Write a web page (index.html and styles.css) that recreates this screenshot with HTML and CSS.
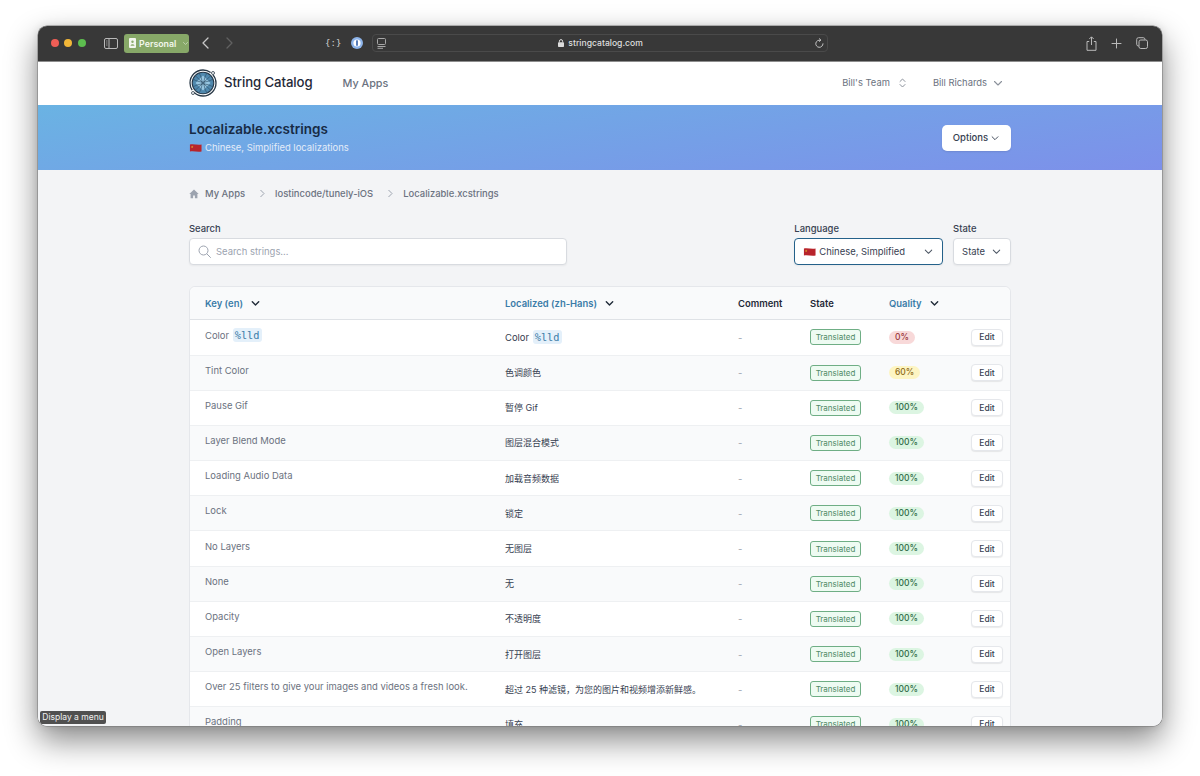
FILE: index.html
```html
<!DOCTYPE html>
<html lang="en">
<head>
<meta charset="utf-8">
<title>String Catalog</title>
<link rel="stylesheet" href="styles.css">
</head>
<body>
<svg class="defs" width="0" height="0" aria-hidden="true">
  <symbol id="flag" viewBox="0 0 14 10">
    <path d="M1 1.200c4-1 8 1 12.500 0v7.600c-4.500 1-8.500-1-12.500 0z" fill="#b8242b"/>
    <path d="M3.400 2.300l.4 1 1 .1-.8.6.3 1-.9-.6-.9.6.3-1-.8-.6 1-.1z" fill="#e0a92e"/>
  </symbol>
  <symbol id="chev" viewBox="0 0 12 12">
    <path d="M2.500 4.500L6 8l3.500-3.500" fill="none" stroke="currentColor" stroke-width="1.100" stroke-linecap="round" stroke-linejoin="round"/>
  </symbol>
  <symbol id="chevb" viewBox="0 0 12 12">
    <path d="M2.500 4.200L6 7.700l3.500-3.500" fill="none" stroke="currentColor" stroke-width="1.500" stroke-linecap="round" stroke-linejoin="round"/>
  </symbol>
</svg>
<div class="window">
  <header class="toolbar">
    <div class="lights"><i class="light red"></i><i class="light yellow"></i><i class="light green"></i></div>
    <svg class="tb-icon sidebar" width="14" height="11" viewBox="0 0 14 11"><rect x=".5" y=".5" width="13" height="10" rx="1.500" fill="none" stroke="#b9b9b9"/><path d="M5 .5v10" stroke="#b9b9b9"/><path d="M2 3h1.500M2 5h1.500M2 7h1.500" stroke="#b9b9b9" stroke-width=".7"/></svg>
    <div class="profile">
      <svg width="7" height="10" viewBox="0 0 7 10"><rect width="7" height="10" rx="1" fill="#f3f6ee"/><circle cx="3.500" cy="3.800" r="1.200" fill="#8aab6c"/><path d="M1.500 7.800c0-2.200 4-2.200 4 0z" fill="#8aab6c"/></svg>
      <span>Personal</span>
      <svg class="profile-chev" width="7" height="7" viewBox="0 0 12 12"><use href="#chevb"/></svg>
    </div>
    <svg class="nav-back" width="7" height="12" viewBox="0 0 7 12"><path d="M6 1L1 6l5 5" fill="none" stroke="#c8c8c8" stroke-width="1.300" stroke-linecap="round" stroke-linejoin="round"/></svg>
    <svg class="nav-fwd" width="7" height="12" viewBox="0 0 7 12"><path d="M1 1l5 5-5 5" fill="none" stroke="#616161" stroke-width="1.300" stroke-linecap="round" stroke-linejoin="round"/></svg>
    <span class="ext-code">{:}</span>
    <svg class="ext-pw" width="12" height="12" viewBox="0 0 12 12"><circle cx="6" cy="6" r="6" fill="#8db4ea"/><circle cx="6" cy="6" r="3.600" fill="#fff"/><rect x="5.200" y="3.200" width="1.600" height="5.600" rx=".5" fill="#2f5da8"/></svg>
    <div class="address">
      <svg class="addr-reader" width="9" height="11" viewBox="0 0 9 11"><rect x=".5" y=".5" width="8" height="6" rx="1" fill="none" stroke="#a8a8a8"/><path d="M.5 8.500h8M.5 10.300h5.500" stroke="#a8a8a8"/></svg>
      <div class="addr-center">
        <svg width="6" height="8" viewBox="0 0 6 8"><rect y="3.200" width="6" height="4.800" rx=".8" fill="#dcdcdc"/><path d="M1.400 3.400V2.200a1.600 1.600 0 013.200 0v1.200" fill="none" stroke="#dcdcdc"/></svg>
        <span>stringcatalog.com</span>
      </div>
      <svg class="addr-reload" width="9" height="11" viewBox="0 0 9 11"><path d="M5.200 2.200A3.600 3.600 0 108 5.800" fill="none" stroke="#c4c4c4" stroke-linecap="round"/><path d="M4 .4l2 1.700-2 1.600" fill="none" stroke="#c4c4c4" stroke-width=".9"/></svg>
    </div>
    <div class="tb-right">
      <svg width="11" height="15" viewBox="0 0 11 15"><path d="M3.200 5.500H1v8.800h9V5.500H7.800" fill="none" stroke="#b9b9b9"/><path d="M5.500 9V1M3.300 3L5.500.8 7.700 3" fill="none" stroke="#b9b9b9"/></svg>
      <svg width="11" height="11" viewBox="0 0 11 11"><path d="M5.500 1v9M1 5.500h9" stroke="#b9b9b9" stroke-linecap="round"/></svg>
      <svg width="12" height="12" viewBox="0 0 12 12"><rect x="3" y="3" width="8.500" height="8.500" rx="1.800" fill="none" stroke="#b9b9b9"/><path d="M3 9h-.5A1.800 1.800 0 01.700 7.200V2.500A1.800 1.800 0 012.500.7h4.700A1.800 1.800 0 019 2.500V3" fill="none" stroke="#b9b9b9"/></svg>
    </div>
  </header>

  <div class="page">
    <nav class="topnav">
      <div class="container nav-inner">
        <svg class="logo" width="28" height="28" viewBox="0 0 28 28">
          <circle cx="14" cy="14" r="13" fill="none" stroke="#2a3a48" stroke-width="1.300" stroke-dasharray="30 3 36 3"/>
          <circle cx="14" cy="14" r="10.800" fill="#4f88ad" stroke="#26394a" stroke-width="1.100"/>
          <path d="M14 6.500l7.500 7.500-7.500 7.500L6.500 14z" fill="#a9d6ee" opacity=".8"/>
          <path d="M4 10c6 4 14 4 20 0M4 18c6-4 14-4 20 0M10 4c4 6 4 14 0 20M18 4c-4 6-4 14 0 20M6 6.500l16 15M22 6.500l-16 15" fill="none" stroke="#2c4a62" stroke-width=".6"/>
          <circle cx="24" cy="4" r="1.500" fill="#fff" stroke="#2a3a48" stroke-width=".8"/>
          <circle cx="4" cy="24" r="1.500" fill="#fff" stroke="#2a3a48" stroke-width=".8"/>
        </svg>
        <span class="brand">String Catalog</span>
        <span class="nav-link">My Apps</span>
        <div class="nav-right">
          <span class="nav-menu">Bill's Team
            <svg width="7" height="10" viewBox="0 0 7 10"><path d="M1 3.500L3.500 1 6 3.500M1 6.500L3.500 9 6 6.500" fill="none" stroke="#8b919b" stroke-linecap="round" stroke-linejoin="round"/></svg>
          </span>
          <span class="nav-menu user">Bill Richards
            <svg class="nav-chev" width="12" height="12"><use href="#chev"/></svg>
          </span>
        </div>
      </div>
    </nav>

    <section class="hero">
      <div class="container hero-inner">
        <div>
          <h1>Localizable.xcstrings</h1>
          <p class="hero-sub"><svg width="13" height="10"><use href="#flag"/></svg>Chinese, Simplified localizations</p>
        </div>
        <button class="options">Options <svg width="10" height="10"><use href="#chev"/></svg></button>
      </div>
    </section>

    <main class="container content">
      <div class="crumbs">
        <svg width="10" height="10" viewBox="0 0 10 10"><path d="M5 .6L.3 5h1.300v4.300h2.500V6.400h1.800v2.900h2.500V5h1.300z" fill="#9ca3af"/></svg>
        <span>My Apps</span>
        <svg class="sep" width="7" height="9" viewBox="0 0 7 9"><path d="M1.500 1l3.500 3.500L1.500 8" fill="none" stroke="#9ca3af"/></svg>
        <span>lostincode/tunely-iOS</span>
        <svg class="sep" width="7" height="9" viewBox="0 0 7 9"><path d="M1.500 1l3.500 3.500L1.500 8" fill="none" stroke="#9ca3af"/></svg>
        <span>Localizable.xcstrings</span>
      </div>

      <div class="filters">
        <div class="field search-field">
          <label>Search</label>
          <div class="input">
            <svg width="13" height="13" viewBox="0 0 13 13"><circle cx="5.500" cy="5.500" r="4.500" fill="none" stroke="#9ca3af"/><path d="M9 9l3.500 3.500" stroke="#9ca3af" stroke-linecap="round"/></svg>
            <span>Search strings...</span>
          </div>
        </div>
        <div class="field lang-field">
          <label>Language</label>
          <div class="select focused">
            <svg width="13" height="10"><use href="#flag"/></svg>
            <span class="select-text">Chinese, Simplified</span>
            <svg class="select-chev" width="11" height="11" viewBox="0 0 12 12"><use href="#chev"/></svg>
          </div>
        </div>
        <div class="field state-field">
          <label>State</label>
          <div class="select">
            <span class="select-text">State</span>
            <svg class="select-chev" width="11" height="11" viewBox="0 0 12 12"><use href="#chev"/></svg>
          </div>
        </div>
      </div>

      <div class="card">
        <div class="row head">
          <div class="sort">Key (en) <b class="sort-btn"><svg width="11" height="11" viewBox="0 0 12 12"><use href="#chevb"/></svg></b></div>
          <div class="sort">Localized (zh-Hans) <b class="sort-btn"><svg width="11" height="11" viewBox="0 0 12 12"><use href="#chevb"/></svg></b></div>
          <div>Comment</div>
          <div>State</div>
          <div class="sort">Quality <b class="sort-btn"><svg width="11" height="11" viewBox="0 0 12 12"><use href="#chevb"/></svg></b></div>
          <div></div>
        </div>
        <div class="row"><div class="key">Color <code>%lld</code></div><div class="loc latin">Color <code>%lld</code></div><div class="dash">-</div><div><span class="state">Translated</span></div><div><span class="q bad">0%</span></div><div class="act"><button class="edit">Edit</button></div></div>
        <div class="row"><div class="key">Tint Color</div><div class="loc">色调颜色</div><div class="dash">-</div><div><span class="state">Translated</span></div><div><span class="q mid">60%</span></div><div class="act"><button class="edit">Edit</button></div></div>
        <div class="row"><div class="key">Pause Gif</div><div class="loc">暂停 Gif</div><div class="dash">-</div><div><span class="state">Translated</span></div><div><span class="q">100%</span></div><div class="act"><button class="edit">Edit</button></div></div>
        <div class="row"><div class="key">Layer Blend Mode</div><div class="loc">图层混合模式</div><div class="dash">-</div><div><span class="state">Translated</span></div><div><span class="q">100%</span></div><div class="act"><button class="edit">Edit</button></div></div>
        <div class="row"><div class="key">Loading Audio Data</div><div class="loc">加载音频数据</div><div class="dash">-</div><div><span class="state">Translated</span></div><div><span class="q">100%</span></div><div class="act"><button class="edit">Edit</button></div></div>
        <div class="row"><div class="key">Lock</div><div class="loc">锁定</div><div class="dash">-</div><div><span class="state">Translated</span></div><div><span class="q">100%</span></div><div class="act"><button class="edit">Edit</button></div></div>
        <div class="row"><div class="key">No Layers</div><div class="loc">无图层</div><div class="dash">-</div><div><span class="state">Translated</span></div><div><span class="q">100%</span></div><div class="act"><button class="edit">Edit</button></div></div>
        <div class="row"><div class="key">None</div><div class="loc">无</div><div class="dash">-</div><div><span class="state">Translated</span></div><div><span class="q">100%</span></div><div class="act"><button class="edit">Edit</button></div></div>
        <div class="row"><div class="key">Opacity</div><div class="loc">不透明度</div><div class="dash">-</div><div><span class="state">Translated</span></div><div><span class="q">100%</span></div><div class="act"><button class="edit">Edit</button></div></div>
        <div class="row"><div class="key">Open Layers</div><div class="loc">打开图层</div><div class="dash">-</div><div><span class="state">Translated</span></div><div><span class="q">100%</span></div><div class="act"><button class="edit">Edit</button></div></div>
        <div class="row"><div class="key">Over 25 filters to give your images and videos a fresh look.</div><div class="loc">超过 25 种滤镜，为您的图片和视频增添新鲜感。</div><div class="dash">-</div><div><span class="state">Translated</span></div><div><span class="q">100%</span></div><div class="act"><button class="edit">Edit</button></div></div>
        <div class="row"><div class="key">Padding</div><div class="loc">填充</div><div class="dash">-</div><div><span class="state">Translated</span></div><div><span class="q">100%</span></div><div class="act"><button class="edit">Edit</button></div></div>
      </div>
    </main>
  </div>
  <div class="tooltip">Display a menu</div>
</div>
</body>
</html>
```
FILE: styles.css
```css
* { box-sizing: border-box; }
html, body { height: 100%; }
body {
  margin: 0;
  padding: 26px 38px 0;
  background: #fff;
  overflow: hidden;
  font-family: Inter, "Noto Sans CJK SC", sans-serif;
  color: #374151;
}
.defs { position: absolute; }
svg { display: block; flex: none; }

.window {
  position: relative;
  width: 1124px;
  height: 700px;
  border-radius: 9px;
  overflow: hidden;
  box-shadow: 0 0 0 .5px #777, 0 14px 32px rgba(0,0,0,.48), 0 0 8px rgba(0,0,0,.12);
  background: #f3f4f6;
}

.toolbar {
  height: 36px;
  background: #383838;
  border-bottom: 1px solid #8d8d8d;
  display: flex;
  align-items: center;
  padding: 0 0 1px 13px;
}
.lights { display: flex; gap: 5.300px; }
.light { width: 8px; height: 8px; border-radius: 50%; }
.red { background: #ef5e56; }
.yellow { background: #f2b738; }
.green { background: #5dbe4f; }
.sidebar { margin-left: 18px; }
.profile {
  margin-left: 6.500px;
  width: 65px;
  height: 19px;
  border-radius: 3px;
  background: #87a868;
  display: flex;
  align-items: center;
  padding-left: 5px;
  gap: 3px;
  color: #f2f6ec;
  font-size: 8.800px;
  font-weight: 600;
}
.profile-chev { color: #c4d6b3; margin-left: 3px; }
.nav-back { margin-left: 13px; }
.nav-fwd { margin-left: 17px; }
.ext-code {
  margin-left: 92px;
  width: 14px;
  color: #d0d0d0;
  font: 9px "DejaVu Sans Mono", monospace;
  white-space: nowrap;
}
.ext-pw { margin-left: 12px; }
.address {
  margin-left: 9px;
  width: 456px;
  height: 18px;
  border: 1px solid #4a4a4a;
  border-radius: 4px;
  display: flex;
  align-items: center;
  padding: 0 4px 0 4px;
}
.addr-center {
  flex: 1;
  display: flex;
  justify-content: center;
  align-items: center;
  gap: 4px;
  color: #dedede;
  font-size: 8.600px;
  font-weight: 500;
}
.addr-reload { margin-right: -1px; }
.tb-right {
  margin-left: auto;
  margin-right: 14px;
  display: flex;
  align-items: center;
  gap: 14px;
}

.container { width: 822px; margin: 0 auto; }
.page { background: #f3f4f6; }

.topnav { height: 43px; background: #fff; padding-bottom: 2px; }
.nav-inner { height: 100%; display: flex; align-items: center; }
.brand { margin-left: 7px; font-size: 13.200px; line-height: 16px; padding-bottom: 1px; font-weight: 500; color: #1f2937; letter-spacing: -.1px; }
.nav-link { margin-left: 30px; padding-top: 2px; font-size: 10.800px; font-weight: 500; color: #6b7280; }
.nav-right { margin-left: auto; display: flex; align-items: center; gap: 27px; padding-right: 7px; }
.nav-menu { display: flex; align-items: center; gap: 9px; font-size: 9.400px; font-weight: 400; color: #6b7280; }
.nav-menu.user { gap: 5px; }
.nav-chev { color: #8b919b; }

.hero {
  height: 65px;
  background: linear-gradient(172deg, #6ab3e3, #7d90ea);
}
.hero-inner { height: 100%; display: flex; align-items: center; justify-content: space-between; }
h1 { margin: -1px 0 0; font-size: 13.500px; line-height: 18px; font-weight: 600; color: #172b45; }
.hero-sub { margin: 3px 0 0; display: flex; align-items: center; gap: 3px; font-size: 9.450px; line-height: 14px; color: #e3ecf8; }
.options {
  width: 69px;
  height: 26px;
  border: 0;
  border-radius: 5px;
  background: #fff;
  box-shadow: 0 1px 2px rgba(0,0,0,.1);
  color: #374151;
  font: 500 9.500px Inter, sans-serif;
  display: flex;
  align-items: center;
  justify-content: center;
  gap: 2px;
}

.crumbs {
  padding-top: 17px;
  height: 52px;
  display: flex;
  align-items: flex-start;
  font-size: 9.450px;
  font-weight: 500;
  line-height: 13px;
  color: #6b7280;
}
.crumbs svg { margin-top: 2px; }
.crumbs span { margin-left: 6px; }
.crumbs .sep { margin-left: 14px; margin-right: 3px; }

.filters { display: flex; align-items: flex-start; gap: 10px; }
.field label { display: block; height: 16px; font-size: 9.450px; line-height: 14px; font-weight: 500; color: #374151; }
.search-field { width: 379px; margin-right: 217px; }
.lang-field { width: 149px; }
.state-field { width: 58px; }
.input, .select {
  height: 27px;
  background: #fff;
  border: 1px solid #d8dbe0;
  border-radius: 4px;
  box-shadow: 0 1px 2px rgba(0,0,0,.05);
  display: flex;
  align-items: center;
  font-size: 9.450px;
}
.input { padding-left: 8px; gap: 5px; color: #9ca3af; }
.select { padding: 0 8px; color: #374151; gap: 3px; }
.select.focused { border: 1.500px solid #24618a; }
.select-chev { margin-left: auto; color: #4b5563; }

.card {
  margin-top: 21px;
  background: #fff;
  border: 1px solid #e5e7eb;
  border-radius: 6px 6px 0 0;
}
.row {
  display: grid;
  grid-template-columns: 299px 233px 72px 79px 1fr 53px;
  height: 35.200px;
  align-items: center;
  border-top: 1px solid #eef0f2;
  font-size: 9.450px;
}
.row > div { padding-left: 16px; }
.row > div:first-child { padding-left: 15px; }
.row:nth-child(odd) { background: #f9fafb; }
.row.head {
  height: 32.500px;
  padding-top: 1px;
  border-top: 0;
  border-bottom: 1px solid #dfe2e6;
  background: #f9fafb;
  font-weight: 600;
  color: #1f2937;
  border-radius: 6px 6px 0 0;
}
.row.head + .row { border-top: 0; height: 35px; }
.sort { color: #3b7ca8; display: flex; align-items: center; gap: 5px; }
.sort-btn { width: 15px; height: 15px; display: flex; align-items: center; justify-content: center; color: #1f2937; border-radius: 3px; }
.key { color: #6b7280; padding-bottom: 5px; font-weight: 400; }
.loc { color: #374151; font-size: 9px; }
.loc.latin { font-size: 9.450px; }
.dash { color: #9ca3af; }
code {
  font: 10.300px "DejaVu Sans Mono", monospace;
  color: #3b7ca8;
  background: #e4f0fa;
  border-radius: 3px;
  padding: 1px 2px;
  margin-left: 1px;
}
.state {
  display: inline-block;
  width: 51px;
  height: 16px;
  border: 1px solid #6fae85;
  border-radius: 3px;
  background: #eefbf2;
  color: #4f8a66;
  font-size: 8px;
  line-height: 14px;
  text-align: center;
}
.q {
  display: inline-block;
  padding: 0 6px;
  height: 13px;
  border-radius: 7px;
  background: #dcf5e2;
  color: #2f6b46;
  font-size: 8.500px;
  line-height: 13px;
  font-weight: 500;
}
.q.bad { background: #f8d9d9; color: #99363a; }
.q.mid { background: #fdf5c3; color: #8e6a15; }
.row > .act { padding: 0 7px 0 0; display: flex; justify-content: flex-end; }
.edit {
  width: 32px;
  height: 17px;
  padding: 0;
  border: 1px solid #e5e7eb;
  border-radius: 4px;
  background: #fff;
  box-shadow: 0 1px 1px rgba(0,0,0,.08);
  color: #374151;
  font: 500 8.500px Inter, sans-serif;
}

.tooltip {
  position: absolute;
  left: 2px;
  bottom: 2px;
  width: 66px;
  height: 13px;
  background: #505050;
  border-radius: 2px;
  color: #f0f0f0;
  font-size: 8.500px;
  line-height: 13px;
  text-align: center;
}
```
